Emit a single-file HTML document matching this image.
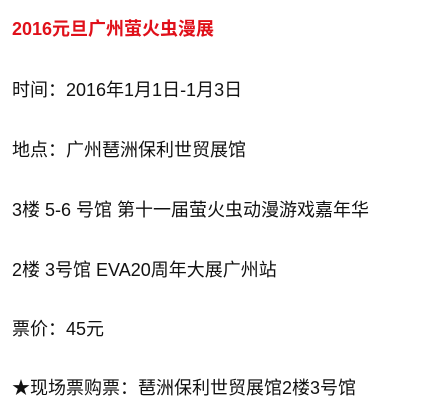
<!DOCTYPE html>
<html><head><meta charset="utf-8"><style>
body{margin:0;width:430px;height:414px;background:#fff;overflow:hidden;font-family:"Liberation Sans","Noto Sans CJK SC",sans-serif;font-size:18px;color:#111;}
div{position:absolute;left:12px;white-space:nowrap;line-height:20px;}
.t{color:#e0101a;font-weight:bold;}
</style></head><body>
<div class="t" style="top:19px">2016元旦广州萤火虫漫展</div>
<div style="top:80px">时间：2016年1月1日-1月3日</div>
<div style="top:140px">地点：广州琶洲保利世贸展馆</div>
<div style="top:200px">3楼 5-6 号馆 第十一届萤火虫动漫游戏嘉年华</div>
<div style="top:260px">2楼 3号馆 EVA20周年大展广州站</div>
<div style="top:319px">票价：45元</div>
<div style="top:378px">★现场票购票：琶洲保利世贸展馆2楼3号馆</div>
</body></html>
